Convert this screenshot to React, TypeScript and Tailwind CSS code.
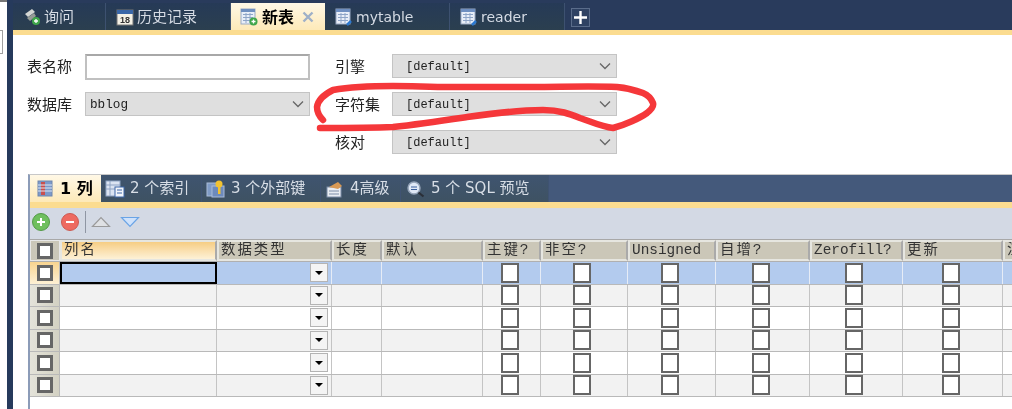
import React from "react";

const cjk = "font-['Liberation_Mono','Noto_Sans_CJK_SC',monospace]";
const ui = "font-['DejaVu_Sans','Noto_Sans_CJK_SC',sans-serif]";

// widths of the grid columns, header and rows share them
const columns = [
  { label: "列名", width: "w-[157px]", wide: true },
  { label: "数据类型", width: "w-[115px]", combo: true, wide: true },
  { label: "长度", width: "w-[50px]", wide: true },
  { label: "默认", width: "w-[101px]", wide: true },
  { label: "主键?", width: "w-[58px]", check: true, wide: true },
  { label: "非空?", width: "w-[87px]", check: true, wide: true },
  { label: "Unsigned", width: "w-[88px]", check: true },
  { label: "自增?", width: "w-[94px]", check: true, wide: true },
  { label: "Zerofill?", width: "w-[93px]", check: true },
  { label: "更新", width: "w-[100px]", check: true, wide: true },
  { label: "注释", width: "w-[60px]", wide: true },
];

function TableIcon({ badge }: { badge?: "plus" | "link" }) {
  return (
    <svg width="18" height="18" viewBox="0 0 18 18" className="shrink-0">
      <rect x="1" y="1" width="14" height="15" fill="#e8eef8" stroke="#9aaac4" />
      <rect x="1" y="1" width="14" height="3" fill="#6f8fc0" />
      <path d="M3 6.500h10M3 9.500h10M3 12.500h10M6 5v10M10 5v10" stroke="#8ea5c8" strokeWidth="1" />
      {badge === "plus" && (
        <>
          <circle cx="13.500" cy="13.500" r="4" fill="#3fa64a" />
          <path d="M11.500 13.500h4M13.500 11.500v4" stroke="#fff" strokeWidth="1.300" />
        </>
      )}
      {badge === "link" && <path d="M12 17l4-4" stroke="#2b78d0" strokeWidth="2.500" />}
    </svg>
  );
}

function TopTab({ label, icon, width, latin }: { label: string; icon: React.ReactNode; width: string; latin?: boolean }) {
  return (
    <div className={`${width} h-[27px] flex items-center gap-[3px] pl-[10px] border-r border-[#3d5170] bg-gradient-to-b from-[#263a57] to-[#2b3f4f] text-[#d5dbe4] ${latin ? "text-[14px]" : "text-[15px]"} ${ui}`}>
      {icon}
      <span className="pt-[2px]">{label}</span>
    </div>
  );
}

function SubTab({ label, icon, width }: { label: string; icon: React.ReactNode; width: string }) {
  return (
    <div className={`${width} h-[27px] flex items-center gap-[5px] pl-[4px] border-r border-[#3f5372] bg-gradient-to-b from-[#3f5470] to-[#3e5262] text-[#d8dee6] text-[15px] ${ui}`}>
      {icon}
      <span>{label}</span>
    </div>
  );
}

function Select({ value, indent }: { value: string; indent?: boolean }) {
  return (
    <div className={`h-[24px] flex items-center justify-between pr-[5px] bg-[#dfdfdf] border border-[#c4c4c4] text-[#222] ${indent ? "pl-[13px] text-[12px]" : "pl-[4px] text-[12.700px]"} ${cjk}`}>
      <span className="pt-[2px]">{value}</span>
      <svg width="12" height="8" viewBox="0 0 12 8">
        <path d="M1 1.500l5 5 5-5" fill="none" stroke="#666" strokeWidth="1.300" />
      </svg>
    </div>
  );
}

function Label({ text }: { text: string }) {
  return <span className="pt-[3px]">{text}</span>;
}

function Check({ small }: { small?: boolean }) {
  return <div className={`${small ? "w-[16px] h-[16px] border-[3px]" : "w-[18px] h-[20px] border-2"} border-[#666] bg-white`} />;
}

function Row({ index }: { index: number }) {
  const selected = index === 0;
  const bg = selected ? "bg-[#b3cbee]" : index % 2 === 1 ? "bg-[#f2f2f2]" : "bg-white";
  return (
    <div className="flex h-[22.500px] border-b border-[#b9b9b9]">
      <div className={`w-[30px] shrink-0 flex items-center justify-center border-r border-[#b9b9b9] ${selected ? "bg-gradient-to-b from-[#f8d48f] to-[#fdf0d4]" : "bg-gradient-to-r from-[#e4e3da] to-[#d3d1c3]"}`}>
        <Check small />
      </div>
      {columns.map((c, i) => (
        <div key={c.label} className={`${c.width} shrink-0 relative flex items-center border-r ${selected ? "border-[#e6ecf6]" : "border-[#c4c4c4]"} ${bg} ${c.check ? "justify-center pr-[4px]" : "justify-end"} ${selected && i === 0 ? "outline-2 -outline-offset-2 outline-black" : ""}`}>
          {c.check && <Check />}
          {c.combo && (
            <div className="w-[18px] h-[19px] mr-[3px] flex items-center justify-center bg-[#f4f4f4] border border-[#b4b4b4]">
              <div className="w-0 h-0 border-x-[4px] border-x-transparent border-t-[4px] border-t-black" />
            </div>
          )}
        </div>
      ))}
    </div>
  );
}

export default function App() {
  return (
    <div className="relative w-[1012px] h-[409px] overflow-hidden bg-white flex blur-[0.6px]">
      <div className="w-[7px] shrink-0">
        <div className="h-[2px] bg-[#777]" />
        <div className="mt-[28px] w-[3px] h-[24px] border border-l-0 border-[#a0a0a0]" />
      </div>
      <div className="w-[6px] shrink-0 bg-[#263a5c]" />

      <div className="flex-1 min-w-0 flex flex-col">
        {/* document tabs */}
        <div className="h-[30px] pt-[3px] bg-[#293b5c] flex items-start">
          <TopTab
            width="w-[93px]"
            label="询问"
            icon={
              <svg width="18" height="18" viewBox="0 0 18 18" className="shrink-0">
                <path d="M2 6l7-5 3 3-7 5z" fill="#d3d6d3" />
                <path d="M4 10l7-5 2 3-6 5z" fill="#959b96" />
                <circle cx="13" cy="13" r="4" fill="#3fa64a" />
                <path d="M11 13h4M13 11v4" stroke="#fff" strokeWidth="1.300" />
              </svg>
            }
          />
          <TopTab
            width="w-[125px]"
            label="历史记录"
            icon={
              <svg width="18" height="18" viewBox="0 0 18 18" className="shrink-0">
                <rect x="1" y="2" width="16" height="15" fill="#f4f1e6" stroke="#777" />
                <rect x="1" y="2" width="16" height="4" fill="#3a67a8" />
                <text x="9" y="15" textAnchor="middle" fontSize="9" fontWeight="700" fill="#333" fontFamily="Liberation Sans">18</text>
              </svg>
            }
          />
          <div className={`w-[94px] h-[27px] flex items-center gap-[4px] pl-[9px] bg-gradient-to-b from-[#fff8e6] to-[#fde9b8] text-[16px] font-bold text-black ${ui}`}>
            <TableIcon badge="plus" />
            <span className="pt-[2px]">新表</span>
            <svg width="12" height="12" viewBox="0 0 12 12" className="ml-[4px]">
              <path d="M1.500 1.500l9 9M10.500 1.500l-9 9" stroke="#9fb0c8" strokeWidth="2.400" />
            </svg>
          </div>
          <TopTab width="w-[125px]" label="mytable" latin icon={<TableIcon badge="link" />} />
          <TopTab width="w-[115px]" label="reader" latin icon={<TableIcon badge="link" />} />
          <div className="ml-[6px] mt-[5px] w-[19px] h-[19px] flex items-center justify-center bg-[#2f4263] border border-[#5a6c8a]">
            <svg width="13" height="13" viewBox="0 0 13 13">
              <path d="M6.500 0v13M0 6.500h13" stroke="#fff" strokeWidth="2.400" />
            </svg>
          </div>
        </div>
        <div className="h-[5px] bg-[#fbdc90]" />

        {/* table properties */}
        <div className={`h-[139px] pt-[19px] pl-[14px] text-[15px] text-[#222] ${ui}`}>
          <div className="grid grid-cols-[58px_225px_25px_57px_225px] grid-rows-[24px_24px_24px] gap-y-[14px] items-center">
            <Label text="表名称" />
            <div className="h-[26px] self-start border-2 border-[#c0c0c0] border-t-[#a8a8a8] bg-white" />
            <span />
            <Label text="引擎" />
            <Select value="[default]" indent />
            <Label text="数据库" />
            <Select value="bblog" />
            <span />
            <Label text="字符集" />
            <Select value="[default]" indent />
            <span />
            <span />
            <span />
            <Label text="核对" />
            <Select value="[default]" indent />
          </div>
        </div>

        {/* column editor */}
        <div className="ml-[15px] flex-1 min-h-0 flex flex-col border-l-2 border-[#8c9cb8] border-t border-t-[#c8c8c8]">
          <div className="h-[27px] bg-[#44597b] flex items-start">
            <div className={`w-[71px] h-[27px] flex items-center gap-[6px] pl-[7px] bg-gradient-to-b from-[#fff8e6] to-[#fde9b8] text-[16px] font-bold text-black ${ui}`}>
              <svg width="17" height="17" viewBox="0 0 17 17" className="shrink-0">
                <rect x="1" y="1" width="14" height="15" fill="#7c9acb" stroke="#6f86ad" />
                <rect x="4" y="2" width="4" height="13" fill="#c8504f" />
                <path d="M1 5h14M1 8h14M1 11h14" stroke="#dfe7f3" />
              </svg>
              <span>1 列</span>
            </div>
            <SubTab
              width="w-[101px]"
              label="2 个索引"
              icon={
                <svg width="20" height="18" viewBox="0 0 20 18" className="shrink-0">
                  <rect x="1" y="1" width="14" height="15" fill="#dbe4f2" stroke="#8ea3c4" />
                  <path d="M1 5h14M1 9h14M5 1v15" stroke="#8ea3c4" />
                  <rect x="10" y="7" width="9" height="10" fill="#f2f5fa" stroke="#3c66a8" />
                  <path d="M12 10h5M12 13h5" stroke="#3c66a8" />
                </svg>
              }
            />
            <SubTab
              width="w-[119px]"
              label="3 个外部键"
              icon={
                <svg width="20" height="18" viewBox="0 0 20 18" className="shrink-0">
                  <rect x="1" y="3" width="12" height="13" fill="#7f9bc6" stroke="#a9bbd8" />
                  <rect x="6" y="6" width="12" height="11" fill="#6d8abb" stroke="#a9bbd8" />
                  <circle cx="13" cy="4" r="3.500" fill="#f2c230" />
                  <rect x="12" y="6" width="2.500" height="8" fill="#f2c230" />
                </svg>
              }
            />
            <SubTab
              width="w-[80px]"
              label="4高级"
              icon={
                <svg width="20" height="18" viewBox="0 0 20 18" className="shrink-0">
                  <rect x="2" y="7" width="14" height="10" fill="#e9edf3" stroke="#7c8da8" />
                  <path d="M4 7l9-5 4 4-4 3z" fill="#d99a55" />
                  <path d="M4 11h10M4 14h10" stroke="#7c8da8" />
                </svg>
              }
            />
            <SubTab
              width="w-[148px]"
              label="5 个 SQL 预览"
              icon={
                <svg width="20" height="18" viewBox="0 0 20 18" className="shrink-0 ml-[1px]">
                  <circle cx="8" cy="8" r="6" fill="#dfe8f6" stroke="#94a3b8" strokeWidth="1.500" />
                  <path d="M5 7h6M5 9.500h6" stroke="#3a5f9c" strokeWidth="1.200" />
                  <path d="M12.500 12.500l5 4" stroke="#2a2f38" strokeWidth="2.200" />
                </svg>
              }
            />
          </div>
          <div className="h-[6px] bg-[#fbdc90]" />

          {/* add / remove / reorder */}
          <div className="h-[32px] flex items-center bg-[#d3d9e4] pl-[1px] pb-[4px] border-b border-[#a8a8a8]">
            <svg width="20" height="20" viewBox="0 0 20 20">
              <circle cx="10" cy="10" r="8.500" fill="#6fbf5e" stroke="#549a48" />
              <path d="M6 10h8M10 6v8" stroke="#fff" strokeWidth="2" />
            </svg>
            <svg width="20" height="20" viewBox="0 0 20 20" className="ml-[9px]">
              <circle cx="10" cy="10" r="8.500" fill="#ee6a60" stroke="#cc5a52" />
              <path d="M6 10h8" stroke="#fff" strokeWidth="2" />
            </svg>
            <div className="ml-[5px] w-px h-[22px] bg-[#8f96a3]" />
            <svg width="20" height="12" viewBox="0 0 20 12" className="ml-[5px]">
              <path d="M1.500 10.500h17L10 1.500z" fill="#dfe1e4" stroke="#9a9a9a" strokeWidth="1.200" />
            </svg>
            <svg width="20" height="12" viewBox="0 0 20 12" className="ml-[9px]">
              <path d="M1.500 1.500h17L10 10.500z" fill="#cfe2fb" stroke="#6aa4e6" strokeWidth="1.200" />
            </svg>
          </div>

          {/* header */}
          <div className={`flex h-[22px] bg-[#e8e8e8] border-b border-[#b0b0b0] text-[14.400px] text-[#333] ${cjk}`}>
            <div className="w-[30px] shrink-0 flex items-center justify-center bg-[#cbc7b8] border border-[#e8e8e8]">
              <Check small />
            </div>
            {columns.map((c, i) => (
              <div key={c.label} className={`${c.width} shrink-0 flex items-center pl-[2px] whitespace-nowrap overflow-hidden border-2 border-[#e6e6e0] border-r-[#aaa] ${c.wide ? "tracking-[2px]" : ""} ${i === 0 ? "bg-gradient-to-b from-[#f6cd83] to-[#fdf1d6]" : "bg-[#cbc7b8]"}`}>
                {c.label}
              </div>
            ))}
          </div>

          {[0, 1, 2, 3, 4, 5].map((i) => (
            <Row key={i} index={i} />
          ))}
        </div>
      </div>

      {/* hand-drawn marker round the charset row */}
      <svg width="1012" height="409" viewBox="0 0 1012 409" className="absolute inset-0 pointer-events-none">
        <path
          d="M320 128C345 128 370 128 393 127C420 124 440 121 467 117C495 113 520 110 543 110C560 110 570 114 580 118C592 122 602 127 613 128C625 125 640 118 647 113C652 109 654 106 653 103C651 98 648 95 643 93C635 90 628 88 617 87C590 86 560 87 533 87C505 87 480 87 450 87C430 87 412 86 393 86C370 86 350 87 333 90C325 94 318 100 317 107C317 112 320 117 323 120"
          fill="none"
          stroke="#f5373a"
          strokeWidth="6.500"
          strokeLinecap="round"
          strokeLinejoin="round"
        />
      </svg>
    </div>
  );
}
